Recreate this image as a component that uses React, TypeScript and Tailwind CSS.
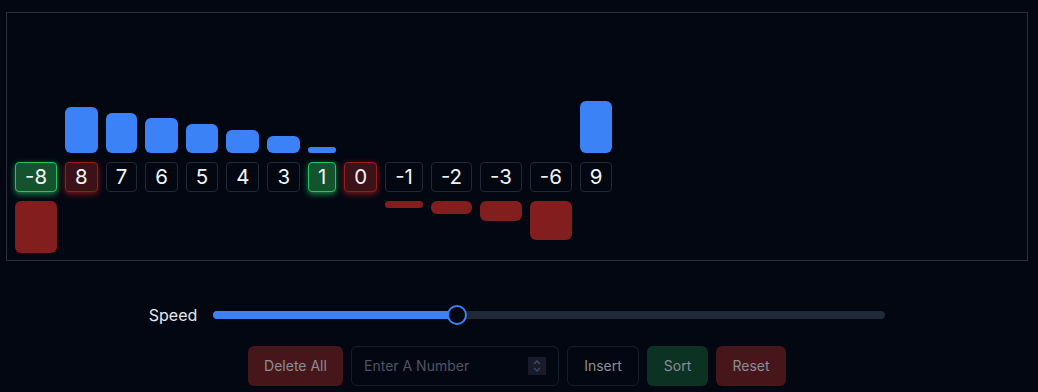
import { useState } from "react";

type Item = { value: number; state: "normal" | "active" | "compare" };

const items: Item[] = [
  { value: -8, state: "active" },
  { value: 8, state: "compare" },
  { value: 7, state: "normal" },
  { value: 6, state: "normal" },
  { value: 5, state: "normal" },
  { value: 4, state: "normal" },
  { value: 3, state: "normal" },
  { value: 1, state: "active" },
  { value: 0, state: "compare" },
  { value: -1, state: "normal" },
  { value: -2, state: "normal" },
  { value: -3, state: "normal" },
  { value: -6, state: "normal" },
  { value: 9, state: "normal" },
];

const BAR_MAX = 52;

export default function App() {
  const [input, setInput] = useState("");
  const maxPos = Math.max(...items.map((i) => i.value), 1);
  const maxNeg = Math.max(...items.map((i) => -i.value), 1);

  return (
    <div className="min-h-[392px] bg-[#030712] pt-3 font-['Inter',sans-serif] text-gray-200">
      {/* visualizer */}
      <div className="ml-[6px] flex h-[249px] w-[1022px] items-end gap-2 border border-[#2a303c] px-2 pb-[7px] pt-2">
        {items.map((item, idx) => {
          const boxClass =
            item.state === "active"
              ? "border-[#22c55e] bg-[#14532d] shadow-[0_2px_6px_rgba(34,197,94,0.7)]"
              : item.state === "compare"
              ? "border-[#991b1b] bg-[#3b1218] shadow-[0_2px_6px_rgba(185,28,28,0.7)]"
              : "border-[#1f2937] bg-transparent";
          return (
            <div key={idx} className="flex flex-col gap-[9px]">
              <div className="flex h-[52px] items-end">
                {item.value > 0 && (
                  <div
                    className="w-full rounded-md bg-[#3b82f6]"
                    style={{ height: (item.value / maxPos) * BAR_MAX }}
                  />
                )}
              </div>
              <div
                className={`flex h-[30px] items-center justify-center rounded border px-[9px] text-[20.4px] leading-7 text-gray-100 ${boxClass}`}
              >
                {item.value}
              </div>
              <div className="flex h-[52px] items-start">
                {item.value < 0 && (
                  <div
                    className="w-full rounded-md bg-[#821e1e]"
                    style={{ height: (-item.value / maxNeg) * BAR_MAX }}
                  />
                )}
              </div>
            </div>
          );
        })}
      </div>

      {/* speed */}
      <div className="mt-[42px] flex items-center justify-center gap-4 pr-[4px]">
        <span className="text-base text-gray-200">Speed</span>
        <div className="relative h-2 w-[672px] rounded-full bg-[#1f2937]">
          <div className="h-2 w-[244px] rounded-full bg-[#3b82f6]" />
          <div className="absolute left-[234px] top-[-6px] h-5 w-5 rounded-full border-2 border-[#3b82f6] bg-[#030712]" />
        </div>
      </div>

      {/* controls */}
      <div className="mt-[19px] flex justify-center gap-2 pr-[4px] text-sm text-[#8b8e94]">
        <button className="h-10 w-[95px] rounded-md bg-[#47161b]">Delete All</button>
        <div className="flex h-10 w-[208px] items-center rounded-md border border-[#161d2a] pl-3 pr-3">
          <input
            value={input}
            onChange={(e) => setInput(e.target.value)}
            placeholder="Enter A Number"
            className="min-w-0 flex-1 bg-transparent text-sm text-gray-300 outline-none placeholder:text-[#4f5562]"
          />
          <div className="flex h-[18px] w-[18px] flex-col items-center justify-center bg-[#1a1b2a]">
            <svg width="8" height="14" viewBox="0 0 8 14" fill="none" stroke="#3b4a66" strokeWidth="1.3">
              <path d="M1 5 L4 2 L7 5" />
              <path d="M1 9 L4 12 L7 9" />
            </svg>
          </div>
        </div>
        <button className="h-10 w-[72px] rounded-md border border-[#161d2a]">Insert</button>
        <button className="h-10 w-[61px] rounded-md bg-[#0c3223]">Sort</button>
        <button className="h-10 w-[70px] rounded-md bg-[#47161b]">Reset</button>
      </div>
    </div>
  );
}
